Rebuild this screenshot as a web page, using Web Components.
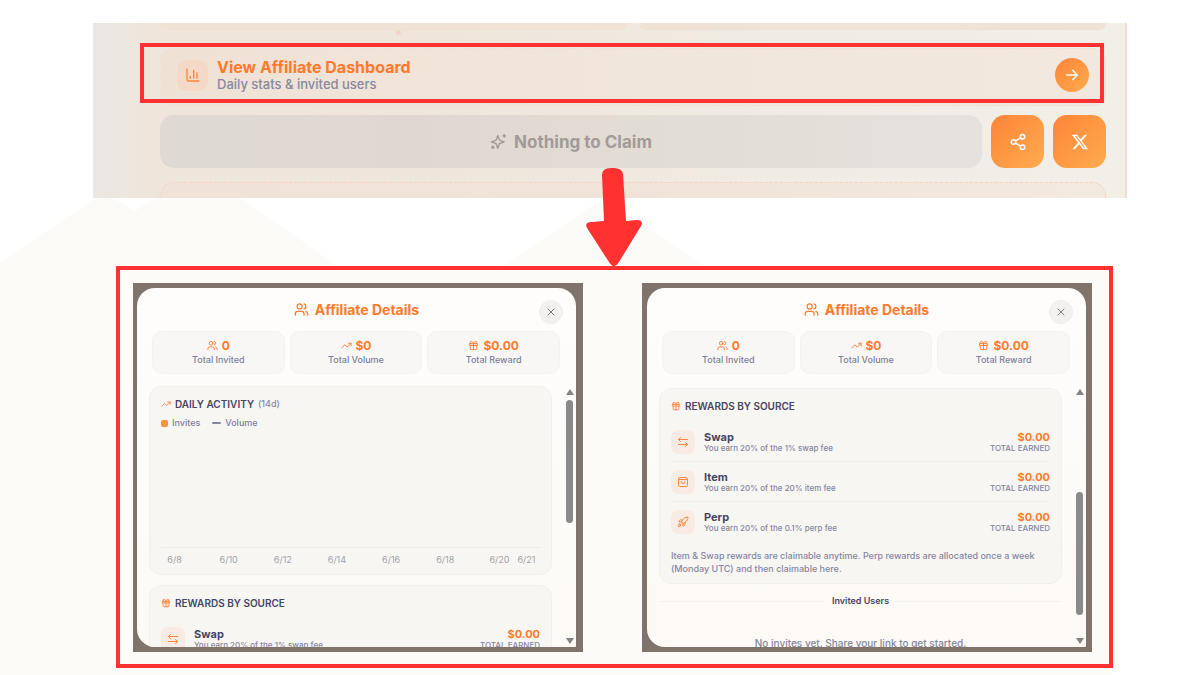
<!DOCTYPE html>
<html lang="en">
<head>
<meta charset="utf-8">
<title>Affiliate Dashboard</title>
<style>
  html, body { margin: 0; min-height: 100%; background: #fff; }
  body { font-family: Inter, "Open Sans", sans-serif; color: #454564; overflow: hidden; }
</style>
</head>
<body>
<guide-page></guide-page>
<script>
const ICONS = {
  chart: '<path d="M3 3v16a2 2 0 0 0 2 2h16M18 17V9M13 17V5M8 17v-3"/>',
  users: '<path d="M16 21v-2a4 4 0 0 0-4-4H6a4 4 0 0 0-4 4v2M16 3.1a4 4 0 0 1 0 7.8M22 21v-2a4 4 0 0 0-3-3.9"/><circle cx="9" cy="7" r="4"/>',
  trend: '<path d="M16 7h6v6M22 7l-8.5 8.5-5-5L2 17"/>',
  gift: '<rect x="3" y="8" width="18" height="4" rx="1"/><path d="M12 8v13M19 12v7a2 2 0 0 1-2 2H7a2 2 0 0 1-2-2v-7M7.5 8a2.5 2.5 0 0 1 0-5C11 3 12 8 12 8s1-5 4.500-5a2.500 2.500 0 0 1 0 5"/>',
  close: '<path d="M18 6 6 18M6 6l12 12"/>',
  arrow: '<path d="M4 12h16M13 5l7 7-7 7"/>',
  share: '<circle cx="18" cy="5" r="3"/><circle cx="6" cy="12" r="3"/><circle cx="18" cy="19" r="3"/><path d="m8.600 13.500 6.800 4M15.400 6.500l-6.800 4"/>',
  x: '<path fill="currentColor" stroke="none" d="M18.244 2.250h3.308l-7.227 8.260 8.502 11.240H16.170l-5.214-6.817L4.990 21.750H1.680l7.730-8.835L1.254 2.250H8.080l4.713 6.231zm-1.161 17.520h1.833L7.084 4.126H5.117z"/>',
  sparkle: '<path d="M11 3.500 13 9.200a2 2 0 0 0 1.300 1.300L20 12.500l-5.700 2a2 2 0 0 0-1.300 1.300L11 21.500l-2-5.700a2 2 0 0 0-1.300-1.300L2 12.500l5.700-2A2 2 0 0 0 9 9.200zM20 2v4M22 4h-4"/><circle cx="4" cy="20" r="1.500"/>',
  swap: '<path d="M7 3 3 7l4 4M3 7h18M17 13l4 4-4 4M21 17H3"/>',
  bag: '<path d="M5 3h14l2 4v12a2 2 0 0 1-2 2H5a2 2 0 0 1-2-2V7zM3 7h18M16 11a4 4 0 0 1-8 0"/>',
  rocket: '<path d="M4.500 16.500c-1.500 1.300-2 5-2 5s3.700-.5 5-2c.7-.8.7-2.100-.1-2.900a2.200 2.200 0 0 0-2.900-.1zM12 15l-3-3a22 22 0 0 1 2-4A12.900 12.900 0 0 1 22 2c0 2.700-.8 7.500-6 11a22.400 22.400 0 0 1-4 2zM9 12H4s.6-3 2-4c1.600-1.100 5 0 5 0M12 15v5s3-.6 4-2c1.100-1.600 0-5 0-5"/>'
};

class Base extends HTMLElement {
  connectedCallback() {
    if (this.shadowRoot) return;
    this.attachShadow({ mode: 'open' }).innerHTML =
      '<style>*{box-sizing:border-box}:host{display:block;box-sizing:border-box}h2,h3,h4,p{margin:0}button{font:inherit;border:0;padding:0;cursor:pointer}</style>' + this.view();
  }
  attr(name) { return this.getAttribute(name) || ''; }
}

customElements.define('ui-icon', class extends Base {
  view() {
    return `<style>:host{display:inline-block;flex:none;width:var(--size,12px);height:var(--size,12px)}svg{display:block;width:100%;height:100%}</style>
    <svg viewBox="0 0 24 24" fill="none" stroke="currentColor" stroke-width="2" stroke-linecap="round" stroke-linejoin="round" aria-hidden="true">${ICONS[this.attr('name')]}</svg>`;
  }
});

customElements.define('hill-backdrop', class extends Base {
  view() {
    return `<style>:host{position:absolute;inset:0;z-index:-1}svg{display:block;width:100%;height:100%}</style>
    <svg viewBox="0 0 1200 675" preserveAspectRatio="none" aria-hidden="true">
      <path fill="#fcfbf7" d="M0 262 94 199Q102 194 114 199L135 211 154 199Q190 180 242 199L338 266H504L594 204Q604 198 614 204L704 266 740 290H1112V675H0Z"/>
    </svg>`;
  }
});

customElements.define('tile-button', class extends Base {
  view() {
    return `<style>:host{flex:none}
      button{display:grid;place-items:center;width:53px;height:53px;border-radius:14px;color:#fff;background:linear-gradient(135deg,#ff8438,#ffab4f)}
      :host([round]) button{width:34px;height:34px;border-radius:50%}
      ui-icon{--size:18px}:host([round]) ui-icon{--size:16px}</style>
    <button type="button" aria-label="${this.attr('label')}"><ui-icon name="${this.attr('icon')}"></ui-icon></button>`;
  }
});

customElements.define('claim-panel', class extends Base {
  view() {
    return `<style>
      :host{position:relative;height:175px;overflow:hidden;padding:0 19px 0 67px;border-right:2px solid #f3dccd;
        background:linear-gradient(90deg,#ebe7e2 0,#ece7df 30px,#efe5da 70px,#efe5da 30%,#f0ebe3 65%,#f2efe9 100%)}
      .above{display:grid;grid-template-columns:1fr 1fr;gap:12px;height:7px;margin-bottom:18px}
      .above i{border:1px solid #f3dfd0;border-top:0;border-radius:0 0 14px 14px;background:#f0e3d5}
      .entry{display:flex;align-items:center;gap:9px;height:58px;padding:0 16px 4px;border:1px dashed #f2dfd1;border-radius:14px;background:linear-gradient(90deg,#f0e1d5,#f1e6da 50%,#f2e8df)}
      .badge{display:grid;place-items:center;width:31px;height:31px;border-radius:9px;background:#f4d9c8;color:#ff8438;--size:16px}
      .copy{flex:1}
      h2{font-size:16px;line-height:18px;font-weight:700;color:#ff7a2b}
      p{font-size:13px;line-height:16px;font-weight:500;color:#8689a0}
      .actions{display:flex;gap:9px;margin:9px 0 14px}
      .claim{flex:1;display:flex;align-items:center;justify-content:center;gap:7px;border-radius:14px;color:#a19a97;font-size:17px;font-weight:700;--size:17px;
        background:linear-gradient(90deg,#dfd9d4,#e0d8d0 30%,#e2ddd6 65%,#e5e1dc)}
      .below{height:40px;border:1px dashed #f8d4bf;border-radius:14px;background:linear-gradient(90deg,#f1e2d7,#f0e4d9 50%,#f2e9e1)}
      .dot{position:absolute;left:303px;top:7px;width:5px;height:5px;border-radius:50%;background:#f5d5c2}
      .mark{position:absolute;left:47px;right:21px;top:20px;height:60px;border:4px solid #ff3131}
    </style>
    <div class="above"><i></i><i></i></div>
    <div class="entry"><span class="badge"><ui-icon name="chart"></ui-icon></span>
      <div class="copy"><h2>View Affiliate Dashboard</h2><p>Daily stats &amp; invited users</p></div>
      <tile-button round icon="arrow" label="Open affiliate dashboard"></tile-button></div>
    <div class="actions"><button class="claim" type="button"><ui-icon name="sparkle"></ui-icon>Nothing to Claim</button>
      <tile-button icon="share" label="Share"></tile-button><tile-button icon="x" label="Post on X"></tile-button></div>
    <div class="below"></div><span class="dot"></span><span class="mark"></span>`;
  }
});

customElements.define('stat-card', class extends Base {
  view() {
    return `<style>:host{height:43px;padding:6px 0 0;border:1px solid #f4f2ef;border-radius:10px;background:#f9f7f5;text-align:center}
      div{display:flex;justify-content:center;align-items:center;gap:4px;color:#ff7a2b;font-size:12px;line-height:15px;font-weight:700;--size:11px}
      p{font-size:9px;line-height:13px;font-weight:500;color:#7d7f99}</style>
    <div><ui-icon name="${this.attr('icon')}"></ui-icon><span>${this.attr('value')}</span></div><p><slot></slot></p>`;
  }
});

customElements.define('section-card', class extends Base {
  view() {
    return `<style>:host{border:1px solid #f2f0ec;border-radius:12px;background:#f8f6f3;padding:10px 11px 0}
      h3{display:flex;align-items:center;gap:4px;font-size:10px;line-height:14px;font-weight:600;color:#454564}
      ui-icon{--size:10px;color:#ff7a2b}small{font-size:9px;font-weight:500;color:#8486a0}</style>
    <h3><ui-icon name="${this.attr('icon')}"></ui-icon>${this.attr('heading')}${this.attr('note') && `<small>${this.attr('note')}</small>`}</h3><slot></slot>`;
  }
});

customElements.define('activity-chart', class extends Base {
  view() {
    const days = ['6/8', '', '6/10', '', '6/12', '', '6/14', '', '6/16', '', '6/18', '', '6/20', '6/21'];
    return `<style>
      .legend{display:flex;gap:12px;margin-top:5px;font-size:9px;line-height:14px;font-weight:500;color:#7d7f99}
      .legend span{display:flex;align-items:center;gap:4px}
      .legend i{width:7px;height:7px;border-radius:2px;background:#ff913f}.legend .line{width:9px;height:2px;background:#8486a0}
      .plot{height:118px;border-bottom:1px solid #eceae7}
      .days{display:grid;grid-template-columns:repeat(14,1fr);padding-top:5px;font-size:9px;line-height:13px;color:#a3a2a8}
      .days span{justify-self:center;white-space:nowrap}
    </style>
    <div class="legend"><span><i></i>Invites</span><span><i class="line"></i>Volume</span></div>
    <div class="plot"></div><div class="days">${days.map(d => `<span>${d}</span>`).join('')}</div>`;
  }
});

customElements.define('reward-row', class extends Base {
  view() {
    return `<style>
      :host{display:flex;align-items:center;gap:9px;height:40px;border-bottom:1px solid #f0eeeb}
      :host(:last-of-type){border-color:transparent}
      .badge{display:grid;place-items:center;width:24px;height:24px;border-radius:7px;background:#f8ebe3;color:#ff8438;--size:12px}
      .copy{flex:1}h4{font-size:11px;line-height:12px;font-weight:700;color:#454564}
      p{font-size:8px;line-height:10px;font-weight:500;color:#8486a0;white-space:nowrap}
      .sum{text-align:right}.sum b{display:block;font-size:11px;line-height:12px;color:#ff7a2b}</style>
    <span class="badge"><ui-icon name="${this.attr('icon')}"></ui-icon></span>
    <div class="copy"><h4>${this.attr('name')}</h4><p><slot></slot></p></div>
    <div class="sum"><b>$0.00</b><p>TOTAL EARNED</p></div>`;
  }
});

customElements.define('rewards-card', class extends Base {
  view() {
    return `<style>.rows{padding-top:9px}.note{padding:7px 0 8px;font-size:9px;line-height:13px;font-weight:500;color:#8486a0}</style>
    <section-card icon="gift" heading="REWARDS BY SOURCE"><div class="rows"><slot></slot></div><div class="note"><slot name="note"></slot></div></section-card>`;
  }
});

customElements.define('invited-users', class extends Base {
  view() {
    return `<style>:host{padding-top:10px;text-align:center}
      h3{display:flex;align-items:center;gap:7px;font-size:9px;line-height:14px;font-weight:600;color:#454564}
      h3::before,h3::after{content:"";flex:1;height:1px;background:#f5f2ed}
      p{margin-top:28px;font-size:10px;line-height:14px;font-weight:500;color:#8486a0}</style>
    <h3>Invited Users</h3><p>No invites yet. Share your link to get started.</p>`;
  }
});

customElements.define('scroll-rail', class extends Base {
  view() {
    const end = this.hasAttribute('end');
    return `<style>:host{display:flex;flex-direction:column;align-items:center;width:7px;padding:3px 0}
      svg{display:block;width:8px;height:6px;flex:none}.track{flex:1;display:flex;flex-direction:column;align-self:stretch;padding:${end ? '0 0 23px' : '5px 0 0'};justify-content:${end ? 'flex-end' : 'flex-start'}}
      i{height:123px;border-radius:4px;background:#8b8a8b}</style>
    <svg viewBox="0 0 8 6"><path fill="#858484" d="M4 0 8 6H0Z"/></svg><div class="track"><i></i></div><svg viewBox="0 0 8 6"><path fill="#858484" d="M0 0H8L4 6Z"/></svg>`;
  }
});

customElements.define('affiliate-modal', class extends Base {
  view() {
    return `<style>
      :host{background:#7e746c;padding:5px 7px 5px 4px;height:369px}
      :host([end]){padding:5px 6px 5px 5px}
      article{position:relative;display:flex;flex-direction:column;height:100%;border-radius:18px 18px 1px 18px;overflow:hidden;background:linear-gradient(180deg,#fefdfc,#fdfaf5)}
      h2{display:flex;align-items:center;justify-content:center;gap:6px;height:43px;font-size:14px;line-height:17px;font-weight:700;color:#ff7a2b;--size:15px}
      .close{position:absolute;right:13px;top:12px;display:grid;place-items:center;width:24px;height:24px;border-radius:50%;background:#f2f1ef;border:1px solid #eeedeb;color:#777;--size:12px}
      .stats{display:grid;grid-template-columns:repeat(3,1fr);gap:5px;padding:0 16px 0 15px}
      .body{flex:1;min-height:0;display:flex;gap:14px;padding:12px 3px 0 12px}
      .scroll{flex:1;min-height:0;overflow:hidden;display:flex;flex-direction:column;gap:10px}
      :host([end]) .scroll{gap:0;padding-top:2px}
      ::slotted(*){flex:none}
    </style>
    <article><h2><ui-icon name="users"></ui-icon>Affiliate Details</h2>
      <button class="close" type="button" aria-label="Close"><ui-icon name="close"></ui-icon></button>
      <div class="stats"><stat-card icon="users" value="0">Total Invited</stat-card><stat-card icon="trend" value="$0">Total Volume</stat-card><stat-card icon="gift" value="$0.00">Total Reward</stat-card></div>
      <div class="body"><div class="scroll"><slot></slot></div><scroll-rail ${this.hasAttribute('end') ? 'end' : ''}></scroll-rail></div>
    </article>`;
  }
});

customElements.define('down-arrow', class extends Base {
  view() {
    return `<style>:host{position:absolute;left:50%;top:167px;width:56px;height:100px;margin-left:-14px;z-index:2}svg{display:block}</style>
    <svg width="56" height="100" viewBox="0 0 56 100" aria-hidden="true"><path fill="#ff3131" d="M16 8Q16 1 25 1Q36 0 37 7L40 54 51 53Q58 53 55 59L33 95Q28 103 23 95L1 61Q-2 55 6 55L18 54Z"/></svg>`;
  }
});

customElements.define('guide-page', class extends Base {
  view() {
    return `<style>:host{position:relative;isolation:isolate;min-height:100vh;padding:23px 0 7px}
      claim-panel{margin:0 73px 0 93px}
      .frame{display:grid;grid-template-columns:1fr 1fr;gap:59px;margin:68px 87px 0 116px;padding:13px 17px 12px 13px;border:4px solid #ff3131;background:#fcfbf7}
      .chart{height:189px}
    </style>
    <hill-backdrop></hill-backdrop>
    <claim-panel></claim-panel><down-arrow></down-arrow>
    <div class="frame">
      <affiliate-modal>
        <section-card class="chart" icon="trend" heading="DAILY ACTIVITY" note="(14d)"><activity-chart></activity-chart></section-card>
        <rewards-card><reward-row icon="swap" name="Swap">You earn 20% of the 1% swap fee</reward-row></rewards-card>
      </affiliate-modal>
      <affiliate-modal end>
        <rewards-card>
          <reward-row icon="swap" name="Swap">You earn 20% of the 1% swap fee</reward-row>
          <reward-row icon="bag" name="Item">You earn 20% of the 20% item fee</reward-row>
          <reward-row icon="rocket" name="Perp">You earn 20% of the 0.1% perp fee</reward-row>
          <p slot="note">Item &amp; Swap rewards are claimable anytime. Perp rewards are allocated once a week (Monday UTC) and then claimable here.</p>
        </rewards-card>
        <invited-users></invited-users>
      </affiliate-modal>
    </div>`;
  }
});
</script>
</body>
</html>
